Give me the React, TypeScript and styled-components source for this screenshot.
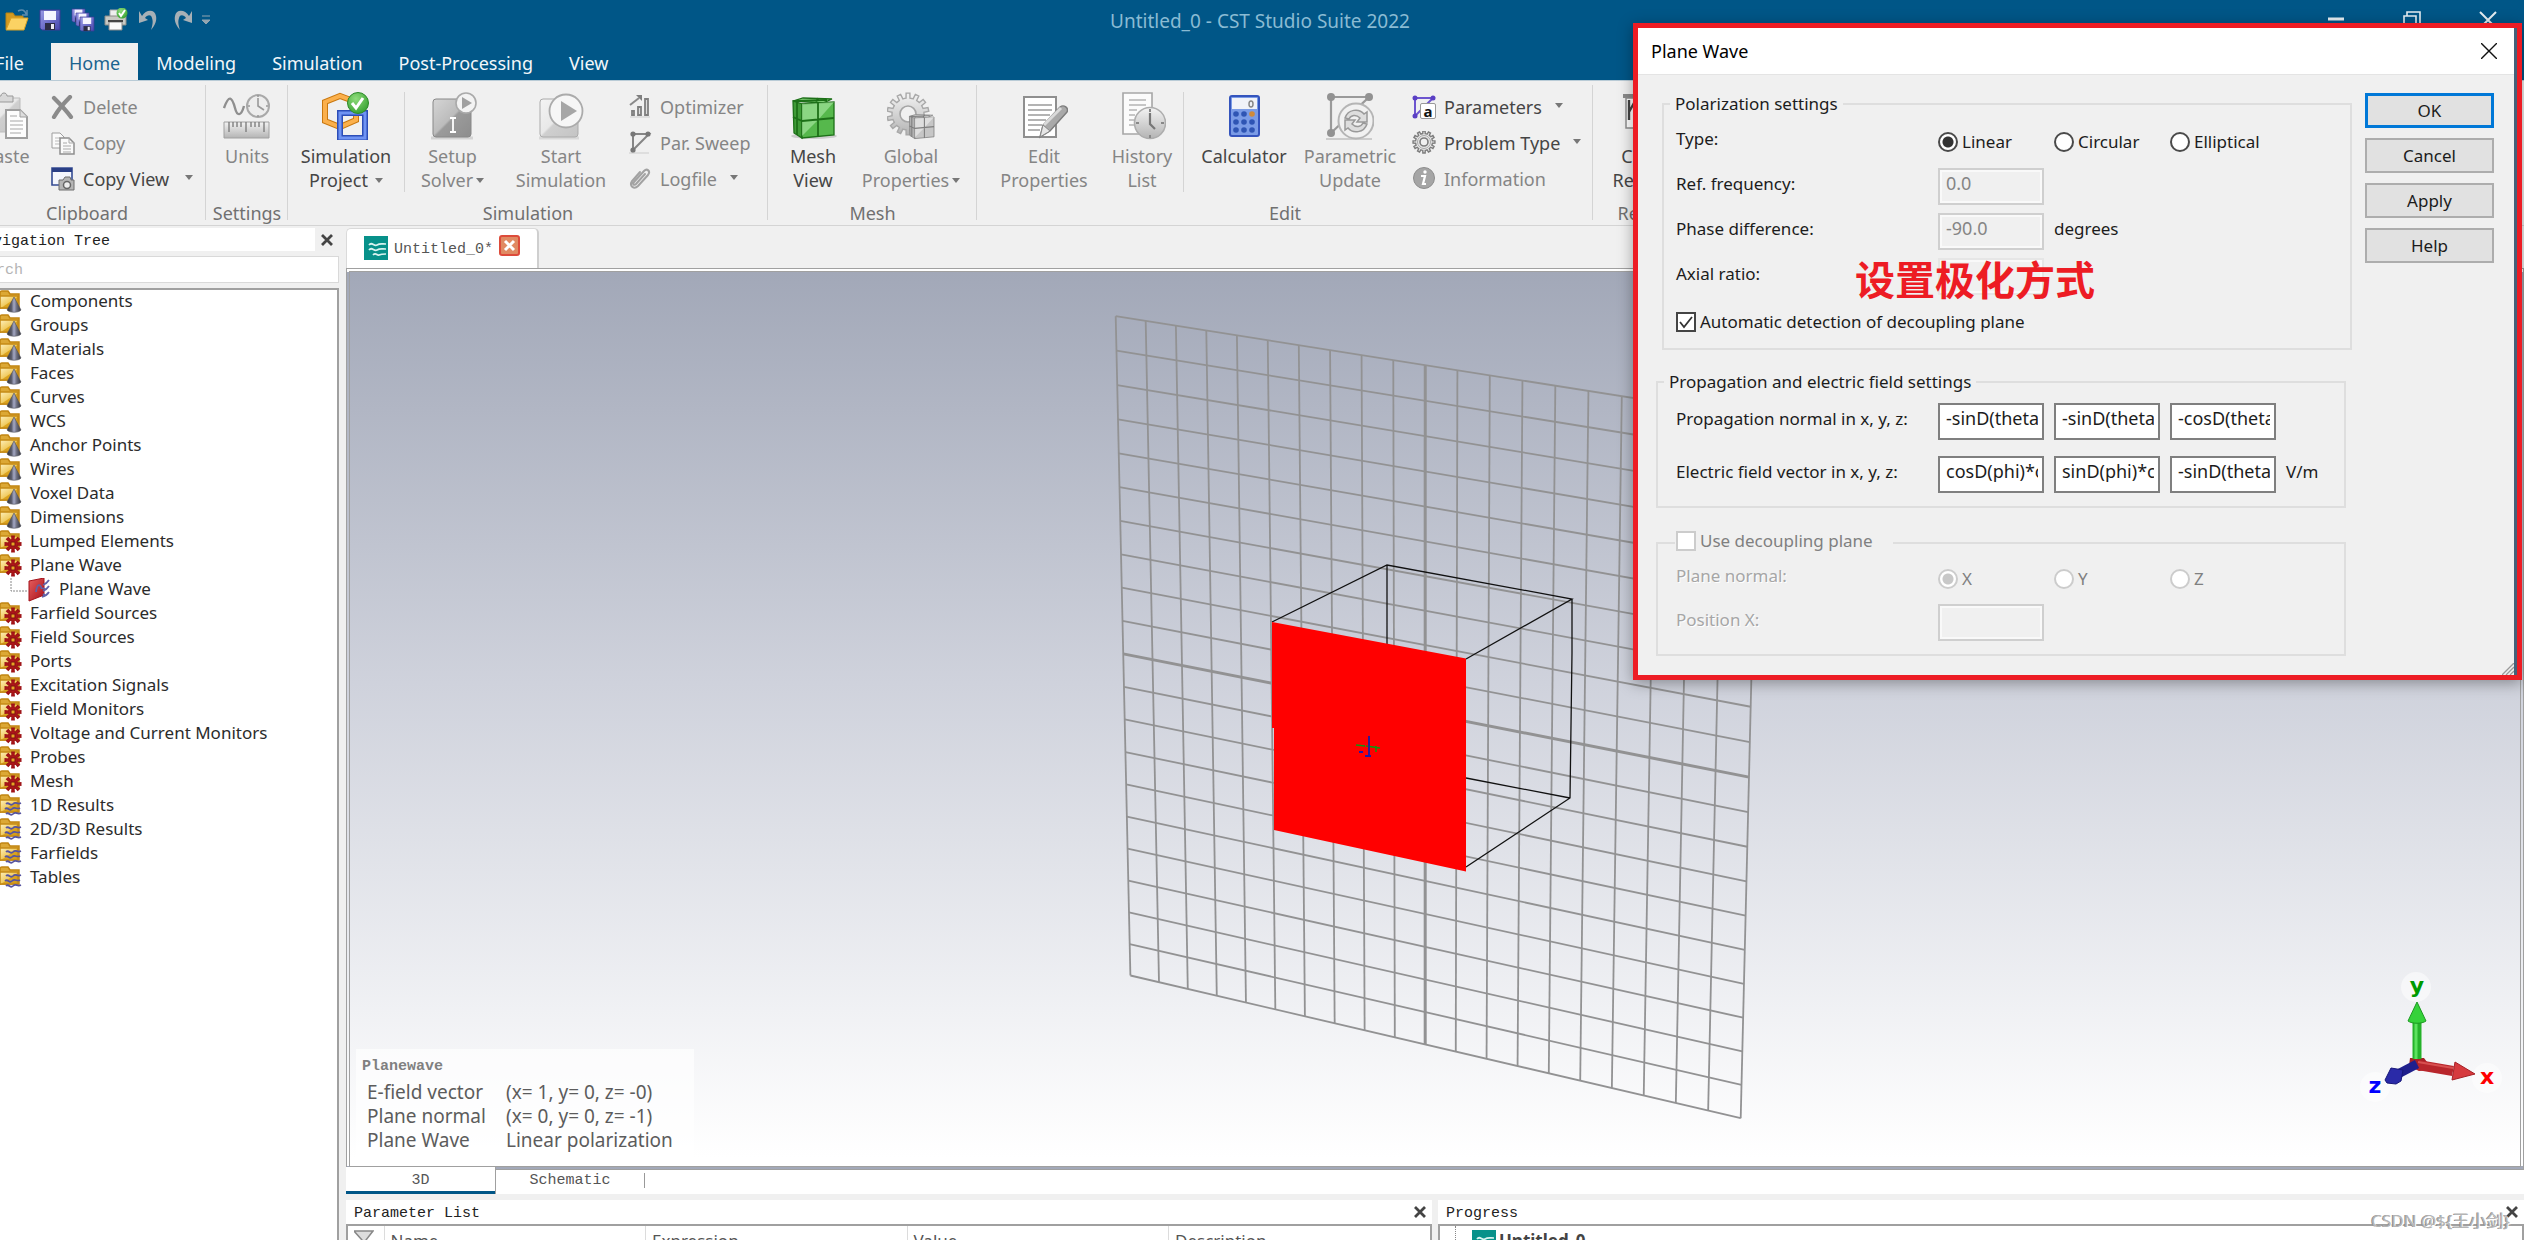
import React from 'react';
import styled, { createGlobalStyle, css } from 'styled-components';

const ui = '"Noto Sans", "Open Sans", "Noto Sans CJK SC", sans-serif';
const mono = '"Liberation Mono", "Noto Sans CJK SC", monospace';
const c = {
  blue: '#005687',
  panel: '#f0f0f0',
  line: '#d4d4d4',
  dark: '#454545',
  muted: '#858585',
  frame: '#a0a0a0',
  red: '#ed1c24',
};

const Global = createGlobalStyle`
  * { box-sizing: border-box; }
  html, body { margin: 0; height: 100%; overflow: hidden; background: ${c.panel}; }
  body, button, input, table { font-family: ${ui}; font-size: 18px; }
  button { border: 0; padding: 0; background: none; color: inherit; }
`;

/* ---------- shell ---------- */
const Shell = styled.div`
  display: flex;
  flex-direction: column;
  height: 100vh;
  margin-left: -32px;
  overflow: hidden;
  background: ${c.panel};
`;

/* ---------- title bar ---------- */
const TitleArea = styled.header`
  display: flex;
  flex-direction: column;
  height: 80px;
  flex: none;
  background: ${c.blue};
`;
const TitleRow = styled.div`
  display: grid;
  grid-template-columns: 1fr auto 1fr;
  height: 43px;
  padding-left: 28px;
`;
const QuickBar = styled.div`
  display: flex;
  align-items: center;
  gap: 8px;
  padding: 0 0 4px 8px;
`;
const IconButton = styled.button`
  display: grid;
  place-items: center;
  width: 25px;
  height: 26px;
`;
const WindowTitle = styled.h1`
  margin: 0;
  font-size: 19px;
  font-weight: 400;
  line-height: 43px;
  color: #8abbd3;
`;
const WindowButtons = styled.div`
  display: flex;
  justify-content: flex-end;
  gap: 51px;
  padding: 7px 24px 0 0;
`;
const Tabs = styled.nav`
  display: flex;
  height: 37px;
`;
const RibbonTab = styled.button<{ $active?: boolean; $wide?: boolean }>`
  width: ${(p) => (p.$wide ? '83px' : 'auto')};
  padding: 0 18px;
  line-height: 40px;
  color: ${(p) => (p.$active ? '#1b648f' : '#f2f7fa')};
  background: ${(p) => (p.$active ? c.panel : 'transparent')};
`;

/* ---------- ribbon ---------- */
const Ribbon = styled.section`
  display: flex;
  flex: none;
  height: 146px;
  border-top: 1px solid #b9cbd6;
  border-bottom: 1px solid ${c.line};
  overflow: hidden;
`;
const Group = styled.div<{ $w: number }>`
  display: flex;
  flex-direction: column;
  flex: none;
  width: ${(p) => p.$w}px;
  position: relative;
  &::after {
    content: '';
    position: absolute;
    right: 0;
    top: 4px;
    bottom: 5px;
    width: 1px;
    background: ${c.line};
  }
`;
const GroupBody = styled.div`
  display: flex;
  flex: 1;
`;
const GroupName = styled.div`
  height: 24px;
  line-height: 24px;
  text-align: center;
  color: #707070;
`;
const Big = styled.button<{ $w: number; $off?: boolean }>`
  display: flex;
  flex-direction: column;
  align-items: center;
  flex: none;
  width: ${(p) => p.$w}px;
  padding-top: 11px;
  line-height: 24px;
  white-space: nowrap;
  color: ${(p) => (p.$off ? c.muted : c.dark)};
  & > svg { margin-bottom: 4px; }
`;
const Inner = styled.span<{ $m?: number }>`
  flex: none;
  width: 1px;
  height: 100px;
  margin: 11px ${(p) => p.$m ?? 0}px 0;
  background: ${c.line};
`;
const Stack = styled.div`
  display: flex;
  flex-direction: column;
  padding: 8px 0 0 6px;
`;
const Small = styled.button<{ $off?: boolean }>`
  display: flex;
  align-items: center;
  gap: 8px;
  height: 36px;
  white-space: nowrap;
  color: ${(p) => (p.$off ? c.muted : c.dark)};
`;
const CaretBox = styled.svg<{ $gap: number }>`
  display: inline-block;
  vertical-align: middle;
  margin: 0 0 4px ${(p) => p.$gap}px;
`;
const Caret = ({ gap = 3 }: { gap?: number }) => (
  <CaretBox $gap={gap} width="8" height="5" viewBox="0 0 8 5"><path d="M0 0H8L4 5Z" fill="#777" /></CaretBox>
);

/* ---------- workspace ---------- */
const Workspace = styled.main`
  display: flex;
  flex: 1;
  min-height: 0;
  gap: 7px;
`;
const NavPanel = styled.aside`
  display: flex;
  flex-direction: column;
  flex: none;
  width: 371px;
  padding-top: 2px;
`;
const PanelHead = styled.div`
  display: flex;
  height: 23px;
  align-items: center;
`;
const PanelTitle = styled.h2<{ $indent: number }>`
  flex: 1;
  height: 23px;
  margin: 0;
  padding-left: ${(p) => p.$indent}px;
  font: 400 15px/27px ${mono};
  color: #222;
  background: #fff;
`;
const CloseButton = styled.button`
  display: grid;
  place-items: center;
  width: 24px;
  height: 24px;
`;
const Search = styled.input`
  height: 27px;
  margin: 5px 0 5px;
  border: 1px solid #d9d9d9;
  padding: 2px 0 0 0;
  font: 15px ${mono};
  background: #fff;
  &::placeholder { color: #b4b4b4; opacity: 1; }
`;
const Tree = styled.ul`
  flex: 1;
  margin: 0;
  padding: 0;
  list-style: none;
  border: solid ${c.frame};
  border-width: 2px 2px 0 0;
  background: #fff;
  overflow: hidden;
`;
const TreeRow = styled.li<{ $nested?: boolean }>`
  display: flex;
  align-items: center;
  gap: ${(p) => (p.$nested ? 0 : 8)}px;
  height: 24px;
  padding-left: ${(p) => (p.$nested ? 42 : 30)}px;
  font-size: 17px;
  line-height: 22px;
  color: #2b2b2b;
  span { padding: 0 0 2px ${(p) => (p.$nested ? 7 : 0)}px; }
`;
const Right = styled.div`
  display: flex;
  flex-direction: column;
  flex: 1;
  min-width: 0;
`;
const DocTabs = styled.div`
  display: flex;
  height: 42px;
  padding-top: 2px;
  flex: none;
`;
const DocTab = styled.div`
  display: flex;
  align-items: center;
  width: 193px;
  padding: 0 0 2px 17px;
  gap: 6px;
  border: 1px solid #dadada;
  border-right: 2px solid #cfcfcf;
  border-bottom: 0;
  border-radius: 5px 5px 0 0;
  background: #fff;
  font: 15px ${mono};
  color: #555;
  span { padding-top: 4px; }
`;
const Viewport = styled.section`
  flex: 1;
  min-height: 0;
  position: relative;
  border: 4px double ${c.frame};
  background: linear-gradient(#a2a8b8, #cfd2dc 46%, #ffffff 99%);
`;
const Scene = styled.svg`
  display: block;
  width: 100%;
  height: 100%;
`;
const Info = styled.div`
  position: absolute;
  left: 6px;
  bottom: 4px;
  width: 338px;
  padding: 6px 6px 10px;
  background: rgba(255, 255, 255, 0.65);
  color: #5c5c5c;
  font-size: 19px;
  line-height: 24px;
`;
const InfoTitle = styled.div`
  font: 700 15px/24px ${mono};
  color: #808080;
  padding-bottom: 1px;
`;
const InfoGrid = styled.dl`
  display: grid;
  grid-template-columns: 139px 1fr;
  margin: 0 0 0 5px;
  white-space: nowrap;
  dt, dd { margin: 0; }
`;
const ViewTabs = styled.div`
  display: flex;
  flex: none;
  height: 24px;
  background: #fff;
`;
const ViewTab = styled.button<{ $active?: boolean }>`
  font: 15px ${mono};
  color: #555;
  ${(p) => p.$active
    ? css`
        position: relative;
        width: 150px;
        height: 27px;
        margin-top: -3px;
        border: solid ${c.frame};
        border-width: 0 1px 0 0;
        box-shadow: inset 0 -3px ${c.blue};
        background: #fff;
      `
    : css`
        width: 149px;
        height: 15px;
        margin-top: 3px;
        line-height: 15px;
        border-right: 1px solid #999;
      `}
`;
const Panels = styled.div`
  display: flex;
  flex: none;
  gap: 6px;
  height: 40px;
  margin-top: 6px;
  overflow: hidden;
`;
const Panel = styled.section`
  flex: 1;
  min-width: 0;
  background: #fff;
`;
const PanelBody = styled.div`
  display: flex;
  height: 40px;
  margin-top: 1px;
  border: 2px solid ${c.frame};
`;
const Table = styled.table`
  width: 100%;
  border-collapse: collapse;
  table-layout: fixed;
  th {
    height: 34px;
    padding: 4px 6px 0;
    text-align: left;
    vertical-align: top;
    font-size: 17px;
    line-height: 22px;
    font-weight: 400;
    color: #555;
    border-right: 1px solid #dcdcdc;
  }
  th:first-child { width: 36px; }
  th:last-child { border: 0; }
`;
const ProgressItem = styled.div`
  display: flex;
  gap: 3px;
  align-items: flex-start;
  margin-left: 15px;
  padding: 4px 0 0 16px;
  border-left: 1px dotted #888;
  font-size: 17px;
  font-weight: 700;
  line-height: 22px;
  color: #444;
`;
const Watermark = styled.div`
  position: absolute;
  right: 14px;
  bottom: 6px;
  font-size: 17px;
  line-height: 26px;
  color: #b5b5b5;
  text-shadow: 1px 1px 0 #fff, -1px 0 0 #8c8c8c;
`;

/* ---------- dialog ---------- */
const RedFrame = styled.div`
  position: absolute;
  top: 23px;
  right: 2px;
  width: 889px;
  padding-right: 3px;
  border: 5px solid ${c.red};
  background: #44627a;
  box-shadow: 0 3px 14px rgba(0, 0, 0, 0.35);
`;
const Dialog = styled.form`
  position: relative;
  background: ${c.panel};
  font-size: 17px;
  color: #1c1c1c;
  button { font-size: 17px; }
`;
const DialogHead = styled.div`
  display: flex;
  align-items: center;
  justify-content: space-between;
  height: 47px;
  padding: 0 13px;
  border-bottom: 1px solid #e4e4e4;
  background: #fff;
  font-size: 18px;
  color: #000;
`;
const DialogBody = styled.div`
  display: flex;
  justify-content: space-between;
  padding: 18px 20px 19px 18px;
`;
const Fields = styled.div`
  display: flex;
  flex-direction: column;
  gap: 21px;
  width: 696px;
`;
const Box = styled.fieldset<{ $inset?: boolean }>`
  min-width: 0;
  width: 690px;
  margin: 0 0 0 ${(p) => (p.$inset ? 6 : 0)}px;
  padding: 0;
  border: 2px solid #dedede;
`;
const Legend = styled.legend<{ $tick?: boolean }>`
  margin-left: ${(p) => (p.$tick ? 17 : 6)}px;
  padding: 0 ${(p) => (p.$tick ? 20 : 5)}px 0 ${(p) => (p.$tick ? 1 : 5)}px;
  line-height: 22px;
`;
const Rows = styled.div<{ $gap: number; $left: number; $top: number; $bottom: number }>`
  display: flex;
  flex-direction: column;
  gap: ${(p) => p.$gap}px;
  padding: ${(p) => p.$top}px 0 ${(p) => p.$bottom}px ${(p) => p.$left}px;
`;
const Row = styled.div<{ $off?: boolean }>`
  display: grid;
  grid-template-columns: 262px 116px 116px 116px auto;
  height: 37px;
  line-height: 32px;
  color: ${(p) => (p.$off ? '#a6a6a6' : 'inherit')};
  text-shadow: ${(p) => (p.$off ? '1px 1px 0 #fff' : 'none')};
`;
const Edit = styled.input`
  width: 106px;
  height: 37px;
  padding: 0 4px 7px 6px;
  border: 2px solid #7f7f7f;
  background: #fff;
  color: #1c1c1c;
  &:disabled {
    border-color: #cfcfcf;
    box-shadow: inset 0 0 0 2px #f9f9f9;
    background: ${c.panel};
    color: #858585;
  }
`;
const FaintEdit = styled(Edit)`
  &:disabled { border-color: #e6e6e6; }
`;
const Choice = styled.label<{ $off?: boolean }>`
  display: inline-flex;
  align-items: center;
  gap: 4px;
  color: ${(p) => (p.$off ? '#808080' : 'inherit')};
  text-shadow: none;
  height: ${(p) => (p.$off === undefined ? '24px' : '37px')};
`;
const Radio = styled.input`
  appearance: none;
  width: 20px;
  height: 20px;
  margin: 0;
  border: 2px solid #4a4a4a;
  border-radius: 50%;
  background: #fff;
  &:checked { background: radial-gradient(circle, #333 5px, #fff 6px); }
  &:disabled { border-color: #cccccc; }
  &:disabled:checked { background: radial-gradient(circle, #c8c8c8 5px, #fff 6px); }
`;
const TickWrap = styled.span`
  display: grid;
  width: 20px;
  height: 20px;
  & > * { grid-area: 1 / 1; }
  svg { pointer-events: none; }
`;
const TickInput = styled.input`
  appearance: none;
  width: 20px;
  height: 20px;
  margin: 0;
  border: 2px solid #444;
  background: #fff;
  &:disabled { border-color: #cccccc; }
`;
const MutedText = styled.span`
  color: #808080;
`;
const Actions = styled.div`
  display: flex;
  flex-direction: column;
  gap: 10px;
  width: 129px;
`;
const Push = styled.button<{ $main?: boolean }>`
  height: 35px;
  border: ${(p) => (p.$main ? '3px solid #0078d7' : '2px solid #adadad')};
  background: #e1e1e1;
`;
const Note = styled.div`
  position: absolute;
  left: 217px;
  top: 220px;
  font: 700 40px/60px "Noto Sans CJK SC", sans-serif;
  color: ${c.red};
`;
const Grip = styled.svg`
  position: absolute;
  right: 0;
  bottom: 0;
`;

/* ---------- icons ---------- */
const DefsBox = styled.svg`
  position: absolute;
`;
const Defs = () => (
  <DefsBox width="0" height="0" aria-hidden="true">
    <defs>
      <linearGradient id="gold" x1="0" y1="0" x2="1" y2="1"><stop offset="0" stopColor="#fdf0bd" /><stop offset=".5" stopColor="#f1cc62" /><stop offset=".55" stopColor="#dca520" /><stop offset="1" stopColor="#d09a18" /></linearGradient>
      <linearGradient id="gray" x1="0" y1="0" x2="0" y2="1"><stop offset="0" stopColor="#f3f3f3" /><stop offset="1" stopColor="#b4b4b4" /></linearGradient>
      <linearGradient id="grayD" x1="0" y1="0" x2="1" y2="1"><stop offset="0" stopColor="#d5d5d5" /><stop offset=".48" stopColor="#bcbcbc" /><stop offset=".52" stopColor="#9b9b9b" /><stop offset="1" stopColor="#8d8d8d" /></linearGradient>
      <linearGradient id="grayL" x1="0" y1="0" x2="1" y2="1"><stop offset="0" stopColor="#f4f4f4" /><stop offset=".48" stopColor="#e8e8e8" /><stop offset=".52" stopColor="#cfcfcf" /><stop offset="1" stopColor="#c4c4c4" /></linearGradient>
      <linearGradient id="cone" x1="0" y1="0" x2="1" y2="0"><stop offset="0" stopColor="#303138" /><stop offset=".32" stopColor="#5c5e6c" /><stop offset=".5" stopColor="#a4a8c4" /><stop offset=".7" stopColor="#6a6c7c" /><stop offset="1" stopColor="#34353c" /></linearGradient>
      <linearGradient id="violet" x1="0" y1="0" x2="1" y2="1"><stop offset="0" stopColor="#9a9be6" /><stop offset="1" stopColor="#4546ae" /></linearGradient>
      <linearGradient id="redp" x1="0" y1="0" x2="1" y2="1"><stop offset="0" stopColor="#e66060" /><stop offset="1" stopColor="#a80f18" /></linearGradient>
      <radialGradient id="green" cx=".4" cy=".3" r=".8"><stop offset="0" stopColor="#8fdc7c" /><stop offset="1" stopColor="#2f9c2a" /></radialGradient>
    </defs>
  </DefsBox>
);

const Svg = ({ s = 24, children }: { s?: number; children: React.ReactNode }) => (
  <svg width={s} height={s} viewBox={`0 0 ${s} ${s}`} fill="none" aria-hidden="true">{children}</svg>
);

const OpenIcon = () => (
  <Svg><path d="M1 21V5h7l2 3h8v3" fill="#d39a20" stroke="#b98312" /><path d="M1 22 6 10h17l-4 12Z" fill="#fbd263" stroke="#d9a023" /><path d="M13 3c4-2 7-1 8 3M22 2v5h-5" stroke="#5d8caf" strokeWidth="1.5" /></Svg>
);
const Disk = ({ x, y, s }: { x: number; y: number; s: number }) => (
  <g transform={`translate(${x} ${y}) scale(${s / 20})`}>
    <path d="M0 0H20V20H2L0 18Z" fill="url(#violet)" stroke="#3a3a94" />
    <rect x="4" y="1" width="12" height="9" fill="#f5f5ff" /><rect x="5" y="13" width="10" height="7" fill="#2c2c44" /><rect x="11" y="14" width="3" height="5" fill="#e8e8f4" />
  </g>
);
const SaveIcon = () => <Svg><Disk x={2} y={2} s={20} /></Svg>;
const SaveAllIcon = () => <Svg><Disk x={1} y={1} s={13} /><Disk x={5} y={5} s={13} /><Disk x={9} y={9} s={14} /></Svg>;
const PrintIcon = () => (
  <Svg><path d="M6 2h10v7H6Z" fill="#eee" stroke="#aaa" /><path d="M1 8h21v9H1Z" fill="#c9c9c3" stroke="#8d8d88" /><path d="M5 14h13v8H5Z" fill="#fafafa" stroke="#888" /><path d="M4 13h15" stroke="#444" strokeWidth="2" /><circle cx="18" cy="5" r="5.5" fill="url(#green)" /><path d="m15 5 2 3 4-6" stroke="#fff" strokeWidth="2" /></Svg>
);
const UndoIcon = () => <Svg><path d="M5 8C9 1 18 1 19 8c1 5-1 9-5 14 2-6 2-9 1-12-1-4-5-3-7 0l3 2L2 15V3Z" fill="#a7b0b6" /></Svg>;
const RedoIcon = () => <Svg><path d="M19 8C15 1 6 1 5 8c-1 5 1 9 5 14-2-6-2-9-1-12 1-4 5-3 7 0l-3 2 9 3V3Z" fill="#a7b0b6" /></Svg>;

const PasteIcon = () => (
  <Svg s={48}><path d="M3 6h34v34H3Z" fill="url(#grayL)" stroke="#bcbcbc" /><path d="M12 4h6c0-4 6-4 6 0h6v6H12Z" fill="#d8d8d8" stroke="#999" /><path d="M23 18h14l7 7v21H23Z" fill="#fdfdfd" stroke="#9f9f9f" strokeWidth="2" /><path d="M37 18v7h7" fill="#ddd" stroke="#9f9f9f" /><path d="M27 24h7M27 29h13M27 33h13M27 37h13M27 41h11" stroke="#c4c4c4" strokeWidth="1.5" /></Svg>
);
const DeleteIcon = () => <Svg><path d="M3 3c5 5 12 12 17 19M19 2C13 8 7 15 3 22" stroke="#8b8b8b" strokeWidth="4.2" strokeLinecap="round" /></Svg>;
const CopyIcon = () => (
  <Svg><path d="M1 2h8l4 4v11H1Z" fill="#fafafa" stroke="#9e9e9e" /><path d="M4 7h5M4 10h5M4 13h5" stroke="#bbb" /><path d="M9 7h9l5 5v11H9Z" fill="#fafafa" stroke="#8e8e8e" strokeWidth="1.5" /><path d="M18 7v5h5M12 12h4M12 15h8M12 18h8M12 21h8" stroke="#aaa" /></Svg>
);
const CopyViewIcon = () => (
  <Svg><path d="M1 1h20v17H1Z" fill="#f4f6fd" stroke="#344b93" strokeWidth="1.6" /><path d="M1 1h20v4H1Z" fill="#2a3f86" /><path d="M8 13h4l2-3h5l1 3h3v10H8Z" fill="#b5b5b5" stroke="#6f6f6f" /><circle cx="16" cy="18" r="3.5" fill="#eee" stroke="#666" strokeWidth="1.5" /></Svg>
);
const UnitsIcon = () => (
  <Svg s={48}><path d="M1 16c5-14 8-11 11 0 2 8 6 9 9 -2" stroke="#8f8f8f" strokeWidth="2.4" /><circle cx="35" cy="14" r="11" fill="#ededed" stroke="#a9a9a9" strokeWidth="2" /><path d="M35 6v8l6 4M35 3v2M35 23v2M25 14h2M43 14h2" stroke="#999" strokeWidth="1.6" /><path d="M1 30h45v16H1Z" fill="url(#gray)" stroke="#a0a0a0" /><path d="M6 30v10M10 30v5M14 30v5M18 30v5M23 30v10M28 30v5M32 30v5M36 30v5M41 30v10" stroke="#777" strokeWidth="1.3" /></Svg>
);
const ProjectIcon = () => (
  <Svg s={48}><path d="M3 10 18 4l16 6v18l-16 7L3 29Z" stroke="#c97810" strokeWidth="6" /><path d="M3 10 18 4l16 6v18l-16 7L3 29Z" stroke="#fbb04c" strokeWidth="4" /><path d="M18 21h25v25H18Z" stroke="#2c4db8" strokeWidth="6" /><path d="M18 21h25v25H18Z" stroke="#6f93f3" strokeWidth="3" /><circle cx="36" cy="11" r="10.5" fill="url(#green)" stroke="#2c8a28" /><path d="m30 11 4 5 7-10" stroke="#fff" strokeWidth="3" /></Svg>
);
const SetupIcon = () => (
  <Svg s={48}><path d="M2 46h42" stroke="#d3d3d3" strokeWidth="3" /><rect x="4" y="7" width="38" height="38" rx="3" fill="url(#grayD)" stroke="#888" /><path d="M21 26h6M24 26v14M21 40h6" stroke="#fff" strokeWidth="1.8" /><circle cx="37" cy="11" r="10" fill="#f3f3f3" stroke="#aaa" strokeWidth="1.6" /><path d="m33 5 10 6-10 6Z" fill="#a0a0a0" /></Svg>
);
const StartIcon = () => (
  <Svg s={48}><path d="M2 46h40" stroke="#d9d9d9" strokeWidth="3" /><rect x="3" y="7" width="38" height="38" rx="3" fill="url(#grayL)" stroke="#ababab" /><circle cx="29" cy="19" r="16.5" fill="#f6f6f6" stroke="#ababab" strokeWidth="1.8" /><path d="m24 9 16 10-16 10Z" fill="#a6a6a6" /></Svg>
);
const OptimizerIcon = () => <Svg><path d="M2 22h20" stroke="#ccc" /><path d="M4 20v-4h2v4ZM10 20v-8h3v8ZM17 20V4h3v16Z" fill="#ddd" stroke="#7f7f7f" strokeWidth="1.8" /><path d="M2 10 11 3" stroke="#8a8a8a" strokeWidth="2" /><path d="M8 0h6v6Z" fill="#7f7f7f" /></Svg>;
const SweepIcon = () => <Svg><path d="M1 22h20" stroke="#ccc" /><path d="M5 3h16L5 19Z" stroke="#858585" strokeWidth="2" /><circle cx="5" cy="3" r="2.6" fill="#777" /><circle cx="20" cy="3" r="2.6" fill="#777" /><circle cx="5" cy="19" r="2.6" fill="#777" /></Svg>;
const LogIcon = () => <Svg><path d="m17 7-9 10c-2 2-4 0-2-2L16 4c3-3 7 0 4 4L10 19c-4 4-9 0-6-5l8-9" stroke="#a2a2a2" strokeWidth="2" strokeLinecap="round" /></Svg>;

const MeshCube = ({ green }: { green?: boolean }) => {
  const k = green ? ['#56b84c', '#8fdc84', '#3f9b37', '#1d7018', '#b8eeb0'] : ['#c6c6c6', '#e9e9e9', '#b2b2b2', '#7e7e7e', '#f3f3f3'];
  return (
    <g>
      <path d="M4 9 14 6l29 1-9 4Z" fill={k[1]} stroke={k[3]} strokeWidth="1.3" />
      <path d="M4 9l9 3v34l-8-5Z" fill={k[2]} stroke={k[3]} strokeWidth="1.3" />
      <path d="M13 12 45 10v33L13 46Z" fill={k[0]} stroke={k[3]} strokeWidth="1.3" />
      <path d="M13 12 45 10 29 28 13 44Z" fill={k[4]} opacity=".55" />
      <path d="M29 11v34M13 29l32-3M8 10v33M4 25l9 4M6 9l32-1M10 8l-1 2M29 6l-2 5" stroke={k[3]} strokeWidth="1.8" />
    </g>
  );
};
const MeshIcon = () => <Svg s={48}><ellipse cx="25" cy="44" rx="23" ry="3" fill="#ccc" /><MeshCube green /></Svg>;

const gearPath = (cx: number, cy: number, ro: number, ri: number, n: number) => {
  let d = '';
  for (let i = 0; i < n; i++) {
    const a = (i / n) * Math.PI * 2;
    const w = Math.PI / n;
    [[ri, -0.95], [ri, -0.55], [ro, -0.4], [ro, 0.4], [ri, 0.55]].forEach(([r, f]) => {
      d += `${d ? 'L' : 'M'}${(cx + r * Math.sin(a + f * w)).toFixed(2)} ${(cy - r * Math.cos(a + f * w)).toFixed(2)}`;
    });
  }
  return d + 'Z';
};
const GlobalIcon = () => (
  <Svg s={48}><path d={gearPath(21, 22, 21, 16, 14)} fill="url(#gray)" stroke="#a8a8a8" strokeWidth="1.4" /><circle cx="21" cy="22" r="8" fill="#f0f0f0" stroke="#a5a5a5" strokeWidth="1.6" /><g transform="translate(20 19) scale(.6)"><MeshCube /></g></Svg>
);
const EditPropIcon = () => (
  <Svg s={48}><path d="M4 5h32v40H4Z" fill="#fff" stroke="#8f8f8f" strokeWidth="2" /><path d="M8 13h24M8 18h24M8 23h22M8 28h18M8 33h14M8 38h12" stroke="#9a9a9a" strokeWidth="1.4" /><path d="m20 45 3-12 17-18c4-3 9 1 7 5L30 39Z" fill="#a9a9a9" stroke="#7c7c7c" strokeWidth="1.4" /><path d="m24 33 17-17" stroke="#dadada" strokeWidth="3" /><path d="m20 45 3-12 7 6Z" fill="#e6e6e6" stroke="#888" /></Svg>
);
const HistoryIcon = () => (
  <Svg s={48}><path d="M5 1h29v41H5Z" fill="#fbfbfb" stroke="#a6a6a6" strokeWidth="1.6" /><path d="M11 8h17M11 13h17M11 18h8M11 23h6M11 28h5M11 33h6" stroke="#b5b5b5" strokeWidth="1.6" /><circle cx="32" cy="31" r="15.5" fill="url(#gray)" stroke="#adadad" strokeWidth="1.6" /><path d="M32 21v11l5 5" stroke="#777" strokeWidth="2.2" /><path d="M32 17v3M32 43v3M18 31h3M43 31h3" stroke="#888" strokeWidth="2" /></Svg>
);
const CalculatorIcon = () => (
  <Svg s={48}>
    <rect x="10" y="4" width="29" height="40" rx="2" fill="#7a9be6" stroke="#3454bd" strokeWidth="2" /><rect x="12" y="6" width="25" height="11" fill="#f0f2f8" /><ellipse cx="31" cy="12" rx="2" ry="3" stroke="#888" strokeWidth="1.5" />
    {[0, 1, 2].map((r) => [0, 1, 2].map((k) => <circle key={`${r}${k}`} cx={16 + k * 8} cy={22 + r * 8} r="2.8" fill={r === 0 && k === 2 ? '#d08a3a' : '#2f55b4'} />))}
  </Svg>
);
const ParametricIcon = () => (
  <Svg s={48}><path d="M0 47h46" stroke="#ccc" strokeWidth="2" /><path d="M5 41V5h38L5 41" stroke="#9a9a9a" strokeWidth="2.2" /><circle cx="5" cy="5" r="4" fill="#929292" /><circle cx="43" cy="5" r="4" fill="#929292" /><circle cx="5" cy="41" r="4" fill="#929292" /><circle cx="30" cy="29" r="17.5" fill="#f1f1f1" stroke="#b5b5b5" strokeWidth="2" /><path d="M19 26c3-9 14-10 19-4l3-2v10H31l3-4c-4-4-9-3-11 1ZM41 32c-3 9-14 10-19 4l-3 2V28h10l-3 4c4 4 9 3 11-1Z" fill="#ddd" stroke="#999" strokeWidth="1.5" /></Svg>
);
const BadgeA = styled.span`
  display: grid;
  width: 24px;
  height: 24px;
  & > * { grid-area: 1 / 1; }
  b {
    place-self: end;
    width: 16px;
    height: 16px;
    font-size: 15px;
    line-height: 14px;
    text-align: center;
    color: #111;
    background: #fff;
    border: 1px solid #999;
    border-radius: 2px;
  }
`;
const ParametersIcon = () => (
  <BadgeA><Svg><path d="M3 21V3h18L3 21" stroke="#6d55cf" strokeWidth="2" /><circle cx="3" cy="3" r="2.5" fill="#5a3fc4" /><circle cx="21" cy="3" r="2.5" fill="#5a3fc4" /><circle cx="3" cy="21" r="2.5" fill="#5a3fc4" /></Svg><b>a</b></BadgeA>
);
const ProblemIcon = () => <Svg><path d={gearPath(12, 11, 11, 8.5, 12)} fill="#e8e8e8" stroke="#7d7d7d" strokeWidth="1.4" /><circle cx="12" cy="11" r="6.5" stroke="#aaa" /><circle cx="12" cy="11" r="4" fill="#f0f0f0" stroke="#7d7d7d" strokeWidth="1.6" /></Svg>;
const InfoIcon = () => <Svg><circle cx="12" cy="11" r="10.5" fill="#a5a5a5" stroke="#8d8d8d" /><path d="M9 9h4l-2 8h3" stroke="#fff" strokeWidth="2.2" /><circle cx="13" cy="5" r="1.7" fill="#fff" /></Svg>;
const ResultsIcon = () => <Svg s={48}><path d="M4 4h40" stroke="#8a8a8a" strokeWidth="4" /><path d="M7 6h34v30H7Z" fill="#fff" stroke="#8f8f8f" strokeWidth="1.5" /><path d="M10 8v20M10 20l5-9" stroke="#444" strokeWidth="2.4" /></Svg>;

type Kind = 'cone' | 'gear' | 'wave';
const waves = 'M8 10c3-3 4 3 7 0s4 1 8-1M7 15c3-3 4 3 7 0s5 1 8-1M8 20c3-3 4 3 7 0s4 1 8-1';
const FolderIcon = ({ kind }: { kind: Kind }) => (
  <Svg>
    <path d="M2 19V3c0-1 1-2 2-2h6l2 3h9v14H2Z" fill="#dca835" stroke="#c18512" strokeWidth="1.5" />
    <path d="M2 6h18v12H2Z" fill="url(#gold)" stroke="#c58a16" strokeWidth="1.5" />
    {kind === 'cone' && <path d="M16 7 9 20c2 3 12 3 14 0Z" fill="url(#cone)" stroke="#50525c" strokeWidth=".6" />}
    {kind === 'gear' && <g><path d={gearPath(15, 14, 8, 4.5, 8)} fill="#b3171b" stroke="#9c1216" strokeWidth="1.2" /><rect x="13" y="12" width="4" height="4" fill="#e8a524" stroke="#7a1010" /></g>}
    {kind === 'wave' && <path d={waves} stroke="#5654a0" strokeWidth="1.7" />}
  </Svg>
);
const PlaneWaveIcon = () => (
  <Svg><path d="M1 3 16 0v17L1 23Z" fill="url(#redp)" stroke="#a4131b" /><path d="M8 14c1-8 4-9 6-3M15 7c3-1 4-2 6-5M15 13c3-1 4-2 6-5M14 19c4-1 5-2 7-5M15 10l3 2M15 16l3 2" stroke="#5f62a8" strokeWidth="1.8" /></Svg>
);
const TealIcon = () => <Svg><path d="M0 0h24v24H0Z" fill="#07918a" /><path d="M5 9c3-4 5 2 8 0s5-1 9-1M5 14c3-4 5 2 8 0s5-1 9-1M9 19c3-3 4 1 6 0s4-1 7-1" stroke="#d9f3ef" strokeWidth="1.7" /></Svg>;
const Cross = () => <svg width="12" height="12" viewBox="0 0 12 12"><path d="m1 1 10 10M11 1 1 11" stroke="#444" strokeWidth="2.8" /></svg>;

/* ---------- 3D scene ---------- */
const quad = [[1115.7, 316.2], [1757.7, 417.7], [1740.7, 1118.2], [1130.4, 975.5]];
const project = (u: number, v: number) => {
  const [[x0, y0], [x1, y1], [x2, y2], [x3, y3]] = quad;
  const dx1 = x1 - x2, dx2 = x3 - x2, dx3 = x0 - x1 + x2 - x3;
  const dy1 = y1 - y2, dy2 = y3 - y2, dy3 = y0 - y1 + y2 - y3;
  const det = dx1 * dy2 - dx2 * dy1;
  const g = (dx3 * dy2 - dx2 * dy3) / det;
  const h = (dx1 * dy3 - dx3 * dy1) / det;
  const w = g * u + h * v + 1;
  return [
    ((x1 - x0 + g * x1) * u + (x3 - x0 + h * x3) * v + x0) / w,
    ((y1 - y0 + g * y1) * u + (y3 - y0 + h * y3) * v + y0) / w,
  ];
};
const steps = Array.from({ length: 21 }, (_, i) => i);
const GridLine = ({ a, b, bold }: { a: number[]; b: number[]; bold: boolean }) => (
  <line x1={a[0]} y1={a[1]} x2={b[0]} y2={b[1]} strokeWidth={bold ? 3 : 1.8} />
);
const Model = () => (
  <Scene viewBox="350 272 2170 894" preserveAspectRatio="xMidYMid meet" fill="none">
    <g stroke="#929293">
      {steps.map((i) => <GridLine key={`v${i}`} a={project(i / 20, 0)} b={project(i / 20, 1)} bold={i === 10} />)}
      {steps.map((i) => <GridLine key={`h${i}`} a={project(0, i / 20)} b={project(1, i / 20)} bold={i === 10} />)}
    </g>
    <path d="M1272 622 1387 565 1572 599 1466 659M1387 565V645M1572 599V653L1570 798 1466 867M1466 778 1570 798" stroke="#111" strokeWidth="1.3" />
    <path d="M1272 622 1466 658.500V871.500L1274 830V728H1272Z" fill="#ff0000" />
    <path d="M1356 745l9 1M1366 746l14 2M1376 746v6" stroke="#0a9a10" strokeWidth="1.5" />
    <path d="M1369 736v21M1359 752h4M1365 756h6" stroke="#1b1ba8" strokeWidth="1.8" />
    <g fill="#fff" opacity=".5"><circle cx="2416" cy="987" r="15" /><circle cx="2487" cy="1078" r="15" /><circle cx="2375" cy="1087" r="15" /></g>
    <path d="M2410 1058h14l3 4v8l-8 1-10-5Z" fill="#a52026" />
    <path d="M2418 1065 2453 1071" stroke="#b8262c" strokeWidth="10" /><path d="M2418 1062 2453 1068" stroke="#d85050" strokeWidth="2" />
    <path d="M2455 1062 2475 1074 2452 1080Z" fill="#d63a3e" stroke="#a52026" />
    <path d="M2417 1064 2398 1074" stroke="#1f1f8c" strokeWidth="9" />
    <path d="M2391 1068 2403 1070 2401 1081 2396 1084 2387 1083 2385 1080Z" fill="#2a2aa8" stroke="#17177a" />
    <path d="M2417 1059V1020" stroke="#25b22a" strokeWidth="9" /><path d="M2416 1059V1020" stroke="#5ce25e" strokeWidth="3" />
    <path d="M2417 1002 2408 1021c4 3 14 3 18 0Z" fill="#35d23a" stroke="#1d9a22" />
    <g fontFamily='"DejaVu Sans", sans-serif' fontWeight="700" fontSize="22" textAnchor="middle">
      <text x="2417" y="993" fill="#009a00">y</text>
      <text x="2487" y="1084" fill="#ff0000">x</text>
      <text x="2375" y="1093" fill="#0000ff">z</text>
    </g>
  </Scene>
);

/* ---------- data ---------- */
const tree: { label: string; kind: Kind; nested?: boolean }[] = [
  ...['Components', 'Groups', 'Materials', 'Faces', 'Curves', 'WCS', 'Anchor Points', 'Wires', 'Voxel Data', 'Dimensions'].map((label) => ({ label, kind: 'cone' as Kind })),
  { label: 'Lumped Elements', kind: 'gear' },
  { label: 'Plane Wave', kind: 'gear' },
  { label: 'Plane Wave', kind: 'gear', nested: true },
  ...['Farfield Sources', 'Field Sources', 'Ports', 'Excitation Signals', 'Field Monitors', 'Voltage and Current Monitors', 'Probes', 'Mesh'].map((label) => ({ label, kind: 'gear' as Kind })),
  ...['1D Results', '2D/3D Results', 'Farfields', 'Tables'].map((label) => ({ label, kind: 'wave' as Kind })),
];

const Tick = ({ id, checked, disabled }: { id: string; checked?: boolean; disabled?: boolean }) => (
  <TickWrap>
    <TickInput type="checkbox" id={id} defaultChecked={checked} disabled={disabled} />
    {checked && <svg width="20" height="20" viewBox="0 0 20 20"><path d="m4 10 4 5 8-10" fill="none" stroke="#333" strokeWidth="1.8" /></svg>}
  </TickWrap>
);

const PlaneWaveDialog = () => (
  <RedFrame>
    <Dialog onSubmit={(e) => e.preventDefault()}>
      <DialogHead>
        <span>Plane Wave</span>
        <IconButton type="button" aria-label="Close dialog"><svg width="16" height="16" viewBox="0 0 16 16"><path d="m0 0 16 16M16 0 0 16" stroke="#111" strokeWidth="1.4" /></svg></IconButton>
      </DialogHead>
      <DialogBody>
        <Fields>
          <Box $inset>
            <Legend>Polarization settings</Legend>
            <Rows $gap={8} $left={12} $top={8} $bottom={8}>
              <Row>
                <span>Type:</span>
                {['Linear', 'Circular', 'Elliptical'].map((t, i) => (
                  <Choice key={t} $off={false}><Radio type="radio" name="type" defaultChecked={i === 0} />{t}</Choice>
                ))}
              </Row>
              <Row><label htmlFor="freq">Ref. frequency:</label><Edit id="freq" defaultValue="0.0" disabled /></Row>
              <Row><label htmlFor="phase">Phase difference:</label><Edit id="phase" defaultValue="-90.0" disabled /><span>degrees</span></Row>
              <Row><label htmlFor="axial">Axial ratio:</label><FaintEdit id="axial" disabled /></Row>
              <Choice $off={false} htmlFor="auto"><Tick id="auto" checked />Automatic detection of decoupling plane</Choice>
            </Rows>
          </Box>
          <Box>
            <Legend>Propagation and electric field settings</Legend>
            <Rows $gap={16} $left={18} $top={10} $bottom={13}>
              <Row>
                <span>Propagation normal in x, y, z:</span>
                <Edit aria-label="Propagation normal x" defaultValue="-sinD(theta)*cosD(phi)" />
                <Edit aria-label="Propagation normal y" defaultValue="-sinD(theta)*sinD(phi)" />
                <Edit aria-label="Propagation normal z" defaultValue="-cosD(theta)" />
              </Row>
              <Row>
                <span>Electric field vector in x, y, z:</span>
                <Edit aria-label="Electric field x" defaultValue="cosD(phi)*cosD(theta)" />
                <Edit aria-label="Electric field y" defaultValue="sinD(phi)*cosD(theta)" />
                <Edit aria-label="Electric field z" defaultValue="-sinD(theta)" />
                <span>V/m</span>
              </Row>
            </Rows>
          </Box>
          <Box>
            <Legend $tick><Choice htmlFor="decouple"><Tick id="decouple" disabled /><MutedText>Use decoupling plane</MutedText></Choice></Legend>
            <Rows $gap={7} $left={18} $top={4} $bottom={13}>
              <Row $off>
                <span>Plane normal:</span>
                {['X', 'Y', 'Z'].map((t, i) => (
                  <Choice key={t} $off><Radio type="radio" name="normal" defaultChecked={i === 0} disabled />{t}</Choice>
                ))}
              </Row>
              <Row $off><label htmlFor="pos">Position X:</label><Edit id="pos" disabled /></Row>
            </Rows>
          </Box>
        </Fields>
        <Actions>
          <Push $main>OK</Push>
          <Push type="button">Cancel</Push>
          <Push type="button">Apply</Push>
          <Push type="button">Help</Push>
        </Actions>
      </DialogBody>
      <Note>设置极化方式</Note>
      <Grip width="12" height="12" viewBox="0 0 12 12"><path d="M0 12 12 0M4 12l8-8M8 12l4-4" stroke="#999" strokeWidth="1.3" /></Grip>
    </Dialog>
  </RedFrame>
);

export default function App() {
  return (
    <>
      <Global />
      <Defs />
      <Shell>
        <TitleArea>
          <TitleRow>
            <QuickBar>
              <IconButton aria-label="Open"><OpenIcon /></IconButton>
              <IconButton aria-label="Save"><SaveIcon /></IconButton>
              <IconButton aria-label="Save all"><SaveAllIcon /></IconButton>
              <IconButton aria-label="Print"><PrintIcon /></IconButton>
              <IconButton aria-label="Undo"><UndoIcon /></IconButton>
              <IconButton aria-label="Redo"><RedoIcon /></IconButton>
              <svg width="8" height="10" viewBox="0 0 8 10"><path d="M0 1h8M0 5h8L4 9Z" fill="#93a5b0" stroke="#93a5b0" strokeWidth="1" /></svg>
            </QuickBar>
            <WindowTitle>Untitled_0 - CST Studio Suite 2022</WindowTitle>
            <WindowButtons>
              <IconButton aria-label="Minimize"><svg width="18" height="18" viewBox="0 0 18 18"><path d="M1 8h16" stroke="#e6eef3" strokeWidth="3" /></svg></IconButton>
              <IconButton aria-label="Restore"><svg width="18" height="18" viewBox="0 0 18 18"><path d="M1 5h12v12H1ZM4 5V1h13v12h-4" fill="none" stroke="#e6eef3" strokeWidth="1.6" /></svg></IconButton>
              <IconButton aria-label="Close"><svg width="18" height="18" viewBox="0 0 18 18"><path d="m1 1 16 16M17 1 1 17" stroke="#e6eef3" strokeWidth="2" /></svg></IconButton>
            </WindowButtons>
          </TitleRow>
          <Tabs>
            <RibbonTab $wide>File</RibbonTab>
            <RibbonTab $active>Home</RibbonTab>
            <RibbonTab>Modeling</RibbonTab>
            <RibbonTab>Simulation</RibbonTab>
            <RibbonTab>Post-Processing</RibbonTab>
            <RibbonTab>View</RibbonTab>
          </Tabs>
        </TitleArea>

        <Ribbon>
          <Group $w={238}>
            <GroupBody>
              <Big $w={77} $off><PasteIcon />Paste</Big>
              <Stack>
                <Small $off><DeleteIcon />Delete</Small>
                <Small $off><CopyIcon />Copy</Small>
                <Small><CopyViewIcon />Copy View<Caret gap={8} /></Small>
              </Stack>
            </GroupBody>
            <GroupName>Clipboard</GroupName>
          </Group>
          <Group $w={82}>
            <GroupBody><Big $w={82} $off><UnitsIcon />Units</Big></GroupBody>
            <GroupName>Settings</GroupName>
          </Group>
          <Group $w={480}>
            <GroupBody>
              <Big $w={116}><ProjectIcon /><span>Simulation</span><span>Project<Caret gap={7} /></span></Big>
              <Inner />
              <Big $w={95} $off><SetupIcon /><span>Setup</span><span>Solver<Caret /></span></Big>
              <Big $w={122} $off><StartIcon /><span>Start</span><span>Simulation</span></Big>
              <Stack>
                <Small $off><OptimizerIcon />Optimizer</Small>
                <Small $off><SweepIcon />Par. Sweep</Small>
                <Small $off><LogIcon />Logfile<Caret gap={5} /></Small>
              </Stack>
            </GroupBody>
            <GroupName>Simulation</GroupName>
          </Group>
          <Group $w={209}>
            <GroupBody>
              <Big $w={90}><MeshIcon /><span>Mesh</span><span>View</span></Big>
              <Big $w={106} $off><GlobalIcon /><span>Global</span><span>Properties<Caret /></span></Big>
            </GroupBody>
            <GroupName>Mesh</GroupName>
          </Group>
          <Group $w={616}>
            <GroupBody>
              <Big $w={134} $off><EditPropIcon /><span>Edit</span><span>Properties</span></Big>
              <Big $w={62} $off><HistoryIcon /><span>History</span><span>List</span></Big>
              <Inner $m={10} />
              <Big $w={100}><CalculatorIcon /><span>Calculator</span></Big>
              <Big $w={112} $off><ParametricIcon /><span>Parametric</span><span>Update</span></Big>
              <Stack>
                <Small><ParametersIcon />Parameters<Caret gap={5} /></Small>
                <Small><ProblemIcon />Problem Type<Caret gap={5} /></Small>
                <Small $off><InfoIcon />Information</Small>
              </Stack>
            </GroupBody>
            <GroupName>Edit</GroupName>
          </Group>
          <Group $w={110}>
            <GroupBody><Big $w={100}><ResultsIcon /><span>Clear</span><span>Results</span></Big></GroupBody>
            <GroupName>Results</GroupName>
          </Group>
        </Ribbon>

        <Workspace>
          <NavPanel>
            <PanelHead>
              <PanelTitle $indent={7}>Navigation Tree</PanelTitle>
              <CloseButton aria-label="Close navigation tree"><Cross /></CloseButton>
            </PanelHead>
            <Search placeholder="Search" aria-label="Search" />
            <Tree>
              {tree.map((n, i) => (
                <TreeRow key={i} $nested={n.nested}>
                  {n.nested
                    ? <><svg width="18" height="24" viewBox="0 0 18 24"><path d="M1 0v13h17" fill="none" stroke="#888" strokeDasharray="2 1" /></svg><PlaneWaveIcon /></>
                    : <FolderIcon kind={n.kind} />}
                  <span>{n.label}</span>
                </TreeRow>
              ))}
            </Tree>
          </NavPanel>

          <Right>
            <DocTabs>
              <DocTab>
                <TealIcon />
                <span>Untitled_0*</span>
                <button aria-label="Close document"><svg width="21" height="21" viewBox="0 0 21 21"><rect x="1" y="1" width="19" height="19" rx="2" fill="#e08a62" stroke="#dd4b3a" strokeWidth="2" /><path d="m6 6 9 9M15 6l-9 9" stroke="#fff" strokeWidth="3" /></svg></button>
              </DocTab>
            </DocTabs>
            <Viewport>
              <Model />
              <Info>
                <InfoTitle>Planewave</InfoTitle>
                <InfoGrid>
                  <dt>E-field vector</dt><dd>(x= 1, y= 0, z= -0)</dd>
                  <dt>Plane normal</dt><dd>(x= 0, y= 0, z= -1)</dd>
                  <dt>Plane Wave</dt><dd>Linear polarization</dd>
                </InfoGrid>
              </Info>
            </Viewport>
            <ViewTabs>
              <ViewTab $active>3D</ViewTab>
              <ViewTab>Schematic</ViewTab>
            </ViewTabs>
            <Panels>
              <Panel>
                <PanelHead><PanelTitle $indent={8}>Parameter List</PanelTitle><CloseButton aria-label="Close parameter list"><Cross /></CloseButton></PanelHead>
                <PanelBody>
                  <Table>
                    <thead>
                      <tr>
                        <th aria-label="Filter"><svg width="20" height="20" viewBox="0 0 20 20"><path d="M0 1h19l-7 9v9l-4-3v-6Z" fill="#ddd" stroke="#888" strokeWidth="1.5" /></svg></th>
                        <th>Name</th><th>Expression</th><th>Value</th><th>Description</th>
                      </tr>
                    </thead>
                  </Table>
                </PanelBody>
              </Panel>
              <Panel>
                <PanelHead><PanelTitle $indent={8}>Progress</PanelTitle><CloseButton aria-label="Close progress"><Cross /></CloseButton></PanelHead>
                <PanelBody><ProgressItem><TealIcon />Untitled_0</ProgressItem></PanelBody>
              </Panel>
            </Panels>
          </Right>
        </Workspace>
      </Shell>
      <PlaneWaveDialog />
      <Watermark>CSDN @$&#123;王小剑&#125;</Watermark>
    </>
  );
}
